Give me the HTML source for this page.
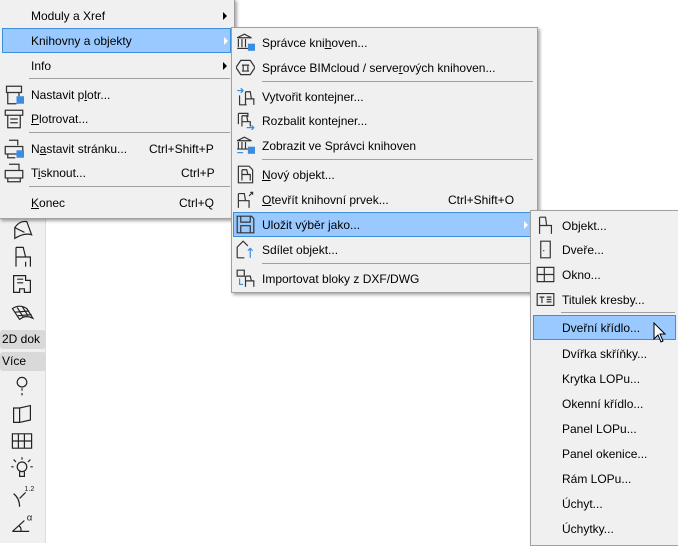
<!DOCTYPE html>
<html><head><meta charset="utf-8"><style>
*{margin:0;padding:0;box-sizing:border-box}
body{width:678px;height:543px;overflow:hidden;background:#fff;font-family:"Liberation Sans",sans-serif;font-size:12px;color:#000;position:relative}
.m{position:absolute;background:#f0f0f0;border:1px solid #a0a0a0;box-shadow:2px 2px 3px rgba(0,0,0,.35)}
.it{position:absolute;left:0;right:0;height:24px;line-height:24px}
.it .t{position:absolute}
.it .k{position:absolute}
.hl{background:#99c9ff;border:1px solid #3d8fdc}
.sep{position:absolute;height:1px;background:#a0a0a0}
.ar{position:absolute;width:0;height:0;border-top:4px solid transparent;border-bottom:4px solid transparent;border-left:4px solid #000;top:8px}
.ic{position:absolute;top:2px;width:19px;height:19px}
u{text-decoration:underline}
.tb{position:absolute;left:0;top:218px;width:46px;height:325px;background:#f0f0f0;border-right:1px solid #ddd}
.tbi{position:absolute;left:10px;width:24px;height:24px}
.lab{position:absolute;left:0;width:46px;height:19px;background:#d9d9d9;border-radius:3px;font-size:12px;line-height:19px;padding-left:2px;overflow:hidden;white-space:nowrap}
</style></head><body>

<div class="tb">
<svg class="tbi" style="top:0px" viewBox="0 0 20 20" fill="none" stroke="#222"><path d="M4 17 L4 8 Q8 2 14 3 L18 14 Q12 12 4 17Z M4 8 L12 12"/></svg>
<svg class="tbi" style="top:27px" viewBox="0 0 20 20" fill="none" stroke="#222"><path d="M5 2 h6 l2 8 h4 v8 M5 2 v16 M5 10 h12 M13 14 v4"/></svg>
<svg class="tbi" style="top:54px" viewBox="0 0 20 20" fill="none" stroke="#222"><path d="M3 3 h10 v4 h4 v10 h-5 v-3 h-4 v3 h-5z M6 6 h5 M6 9 h5"/></svg>
<svg class="tbi" style="top:81px" viewBox="0 0 20 20" fill="none" stroke="#222"><path d="M2 8 Q8 4 14 8 L19 16 Q13 13 8 17 Z M6 7 L11 15 M10 6 L15 14 M4 11 L16 10 M6 14 L18 13"/></svg>
<div class="lab" style="top:112px">2D dok</div>
<div class="lab" style="top:134px">Více</div>
<svg class="tbi" style="top:157px" viewBox="0 0 20 20" fill="none" stroke="#222"><circle cx="10" cy="6" r="4"/><path d="M10 11 v8" stroke-dasharray="2 2"/></svg>
<svg class="tbi" style="top:184px" viewBox="0 0 20 20" fill="none" stroke="#222"><path d="M3 5 h5 l9 -2 v12 l-9 2 h-5z M8 5 v12"/></svg>
<svg class="tbi" style="top:211px" viewBox="0 0 20 20" fill="none" stroke="#222"><path d="M2 4 h16 v12 h-16z M2 10 h16 M7 4 v12 M12 4 v12"/></svg>
<svg class="tbi" style="top:238px" viewBox="0 0 20 20" fill="none" stroke="#222"><circle cx="10" cy="9" r="4"/><path d="M8 13 v4 h4 v-4 M10 1 v2 M3 3 l2 2 M17 3 l-2 2 M1 9 h2 M17 9 h2"/></svg>
<svg class="tbi" style="top:266px" viewBox="0 0 20 20" fill="none" stroke="#222"><path d="M3 8 Q8 12 8 19 M8 12 l5 -5"/><text x="12" y="6" font-size="6" fill="#222" stroke="none">1.2</text></svg>
<svg class="tbi" style="top:293px" viewBox="0 0 20 20" fill="none" stroke="#222"><path d="M2 17 h14 M2 17 L12 8 M7 12 Q10 14 9 17"/><text x="14" y="8" font-size="8" fill="#222" stroke="none">α</text></svg>
</div>

<!-- menu 1 -->
<div class="m" style="left:-1px;top:-1px;width:236px;height:220px;border-left:none;border-top:none">
<div class="it" style="top:5px"><span class="t" style="left:32px">Moduly a Xref</span><span class="ar" style="left:224px"></span></div>
<div class="it hl" style="top:29px;left:3px;right:3px;height:25px"><span class="t" style="left:28px">Knihovny a objekty</span><span class="ar" style="left:221px;border-left-color:#fff"></span></div>
<div class="it" style="top:55px"><span class="t" style="left:32px">Info</span><span class="ar" style="left:224px"></span></div>
<div class="sep" style="top:79px;left:30px;right:4px"></div>
<div class="it" style="top:84px"><svg class="ic" style="left:5px;width:20px;height:20px" viewBox="0 0 16 16" fill="none" stroke="#333"><path d="M2 1h12v5h-12z M3 6v9h7 M12 6v3"/><rect x="10" y="9" width="6" height="6" fill="#3a8de0" stroke="none"/></svg><span class="t" style="left:32px">Nastavit p<u>l</u>otr...</span></div>
<div class="it" style="top:108px"><svg class="ic" style="left:5px;width:20px;height:20px" viewBox="0 0 16 16" fill="none" stroke="#333"><path d="M1 1h14v4h-14z M3 5v10h10v-10 M5 8h6 M5 11h6"/></svg><span class="t" style="left:32px"><u>P</u>lotrovat...</span></div>
<div class="sep" style="top:133px;left:30px;right:4px"></div>
<div class="it" style="top:138px"><svg class="ic" style="left:5px;width:20px;height:20px" viewBox="0 0 16 16" fill="none" stroke="#333"><path d="M4 1h7v4 M1 6h14v6h-14z M3 12v3h6"/><rect x="10" y="9" width="6" height="6" fill="#3a8de0" stroke="none"/></svg><span class="t" style="left:32px">N<u>a</u>stavit stránku...</span><span class="k" style="left:150px">Ctrl+Shift+P</span></div>
<div class="it" style="top:162px"><svg class="ic" style="left:5px;width:20px;height:20px" viewBox="0 0 16 16" fill="none" stroke="#333"><path d="M4 1h8v5 M1 6h14v6h-14z M3 12v3h10v-3"/></svg><span class="t" style="left:32px">T<u>i</u>sknout...</span><span class="k" style="left:182px">Ctrl+P</span></div>
<div class="sep" style="top:187px;left:30px;right:4px"></div>
<div class="it" style="top:192px"><span class="t" style="left:32px"><u>K</u>onec</span><span class="k" style="left:180px">Ctrl+Q</span></div>
</div>

<!-- menu 2 -->
<div class="m" style="left:231px;top:27px;width:307px;height:266px">
<div class="it" style="top:3px"><svg class="ic" style="left:4px" viewBox="0 0 16 16" fill="none" stroke="#333"><path d="M1 4l6-3 6 3z M2 5v7 M5 5v7 M8 5v7 M1 13h10"/><rect x="10" y="9" width="6" height="6" fill="#3a8de0" stroke="none"/></svg><span class="t" style="left:30px">Správce kni<u>h</u>oven...</span></div>
<div class="it" style="top:28px"><svg class="ic" style="left:4px" viewBox="0 0 16 16" fill="none" stroke="#333"><path d="M4 2h8l4 6-4 6h-8l-4-6z M5 6h6 M6 6v5 M10 6v5 M5 11h6"/></svg><span class="t" style="left:30px">Správce BIMcloud / serve<u>r</u>ových knihoven...</span></div>
<div class="sep" style="top:53px;left:30px;right:4px"></div>
<div class="it" style="top:57px"><svg class="ic" style="left:4px" viewBox="0 0 16 16" fill="none" stroke="#333"><path d="M1 3h5 M4 1l2 2-2 2" stroke="#3a8de0"/><path d="M3 7v8h6 M8 4h4l1 6h2v5 M8 4v11 M8 10h7"/></svg><span class="t" style="left:30px">Vytvořit kontejner...</span></div>
<div class="it" style="top:81px"><svg class="ic" style="left:4px" viewBox="0 0 16 16" fill="none" stroke="#333"><path d="M2 2h8v3 M2 2v9 M5 4h4l1 5h2v4 M5 4v9 M5 9h7"/><path d="M9 14h6 M13 12l2 2-2 2" stroke="#3a8de0"/></svg><span class="t" style="left:30px">Rozbalit kontejner...</span></div>
<div class="it" style="top:106px"><svg class="ic" style="left:4px" viewBox="0 0 16 16" fill="none" stroke="#333"><path d="M1 4l6-3 6 3z M2 5v6 M5 5v6 M8 5v6 M1 11h10"/><rect x="10" y="9" width="6" height="6" fill="#3a8de0" stroke="none"/><path d="M1 14h5" stroke="#3a8de0"/></svg><span class="t" style="left:30px">Zobrazit ve Správci knihoven</span></div>
<div class="sep" style="top:131px;left:30px;right:4px"></div>
<div class="it" style="top:135px"><svg class="ic" style="left:4px" viewBox="0 0 16 16" fill="none" stroke="#333"><path d="M2 1h9l3 3v11h-12z M5 4h4l1 4h2v5 M5 4v9 M5 8h7"/></svg><span class="t" style="left:30px"><u>N</u>ový objekt...</span></div>
<div class="it" style="top:160px"><svg class="ic" style="left:4px" viewBox="0 0 16 16" fill="none" stroke="#333"><path d="M2 3h5l1 6h3v6 M2 3v12 M2 9h9 M11 5l3-3 M12 2h2v2"/></svg><span class="t" style="left:30px"><u>O</u>tevřít knihovní prvek...</span><span class="k" style="left:216px">Ctrl+Shift+O</span></div>
<div class="it hl" style="top:184px;left:1px;right:3px;height:25px"><svg class="ic" style="left:2px" viewBox="0 0 16 16" fill="none" stroke="#333"><path d="M1 1h12l2 2v12h-14z M4 1v5h8v-5 M4 15v-6h8v6"/></svg><span class="t" style="left:28px">Uložit výběr jako...</span><span class="ar" style="left:290px;border-left-color:#fff"></span></div>
<div class="it" style="top:210px"><svg class="ic" style="left:4px" viewBox="0 0 16 16" fill="none" stroke="#333"><path d="M1 15v-9l5-5 4 4 M1 15h6"/><path d="M12 15v-8 M10 9l2-2 2 2" stroke="#3a8de0"/></svg><span class="t" style="left:30px">Sdílet objekt...</span></div>
<div class="sep" style="top:235px;left:30px;right:4px"></div>
<div class="it" style="top:239px"><svg class="ic" style="left:4px" viewBox="0 0 16 16" fill="none" stroke="#333"><path d="M1 1h6v5h-6z M8 6h4l1 4h2v5 M8 6v9 M8 10h7"/><path d="M3 8v5h3" stroke="#3a8de0"/></svg><span class="t" style="left:30px">Importovat bloky z DXF/DWG</span></div>
</div>

<!-- menu 3 -->
<div class="m" style="left:530px;top:210px;width:150px;height:336px">
<div class="it" style="top:3px"><svg class="ic" style="left:5px" viewBox="0 0 16 16" fill="none" stroke="#333"><path d="M3 1h5l1 7h4v7 M3 1v14 M3 8h10"/></svg><span class="t" style="left:31px">Objekt...</span></div>
<div class="it" style="top:27px"><svg class="ic" style="left:5px" viewBox="0 0 16 16" fill="none" stroke="#333"><path d="M4 1h8v14h-8z M6 9h1"/></svg><span class="t" style="left:31px">Dveře...</span></div>
<div class="it" style="top:52px"><svg class="ic" style="left:5px" viewBox="0 0 16 16" fill="none" stroke="#333"><path d="M1 2h14v12h-14z M1 8h14 M7 2v12"/></svg><span class="t" style="left:31px">Okno...</span></div>
<div class="it" style="top:77px"><svg class="ic" style="left:5px" viewBox="0 0 16 16" fill="none" stroke="#333"><path d="M1 3h14v10h-14z M3 6h4 M5 6v5 M9 6h4 M9 8h4 M9 10h4"/></svg><span class="t" style="left:31px">Titulek kresby...</span></div>
<div class="sep" style="top:101px;left:30px;right:4px"></div>
<div class="it hl" style="top:104px;left:2px;right:3px;height:25px"><span class="t" style="left:28px">Dveřní křídlo...</span></div>
<div class="it" style="top:131px"><span class="t" style="left:31px">Dvířka skříňky...</span></div>
<div class="it" style="top:156px"><span class="t" style="left:31px">Krytka LOPu...</span></div>
<div class="it" style="top:181px"><span class="t" style="left:31px">Okenní křídlo...</span></div>
<div class="it" style="top:206px"><span class="t" style="left:31px">Panel LOPu...</span></div>
<div class="it" style="top:231px"><span class="t" style="left:31px">Panel okenice...</span></div>
<div class="it" style="top:256px"><span class="t" style="left:31px">Rám LOPu...</span></div>
<div class="it" style="top:281px"><span class="t" style="left:31px">Úchyt...</span></div>
<div class="it" style="top:306px"><span class="t" style="left:31px">Úchytky...</span></div>
</div>

<svg style="position:absolute;left:653px;top:322px" width="14" height="22" viewBox="0 0 14 22"><path d="M1 1 L1 17 L5 13 L8 20 L10 19 L7 12 L12 12 Z" fill="#fff" stroke="#000" stroke-width="1"/></svg>
</body></html>
